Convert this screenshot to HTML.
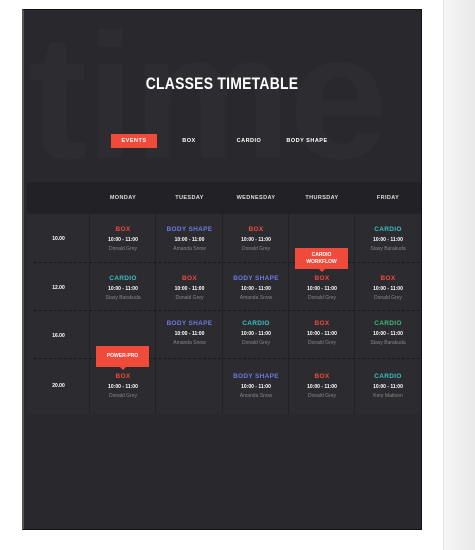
<!DOCTYPE html><html><head><style>
*{margin:0;padding:0;box-sizing:border-box}
body{width:475px;height:550px;background:#fff;position:relative;overflow:hidden;font-family:"Liberation Sans",sans-serif}
.strip{position:absolute;left:443px;top:0;width:32px;height:550px;background:linear-gradient(90deg,#f6f6f6,#e9e9e9);border-left:1px solid #e4e4e4}
.frame{position:absolute;left:22px;top:9px;width:400px;height:521px;background:#29282d;border:1px solid #111;border-left:2px solid #555;overflow:hidden}
.bg{position:absolute;left:4px;top:-2px;font-size:178px;font-weight:bold;color:#2d2c31;letter-spacing:-2px;line-height:1}
h1{position:absolute;left:0;width:396px;top:64px;text-align:center;color:#fff;font-size:17px;font-weight:bold;letter-spacing:0.3px;transform:scaleX(0.82)}
.tab{position:absolute;top:124px;height:14px;font-size:5.5px;font-weight:bold;color:#fff;letter-spacing:.5px;line-height:14px;text-align:center}
.hd{position:absolute;top:172px;height:32px;background:#222126;line-height:32px;font-size:5.5px;font-weight:bold;color:#ddd;text-align:center;letter-spacing:.4px}
.cell{position:absolute;background:#2c2b30;border-right:1px solid #222;text-align:center}
.e{position:absolute;text-align:center;width:66px;height:48px}
.c{position:absolute;text-align:center;font-size:5px;color:#fff;font-weight:bold}
.t{font-size:6.5px;font-weight:bold;letter-spacing:.3px;margin-top:12px;height:10px}
.tm{font-size:5px;color:#fff;font-weight:bold;margin-top:1px}
.n{font-size:5px;color:#888;margin-top:3px}
.r{color:#f04a3a}.b{color:#6b7be0}.cy{color:#3bbfc0}.g{color:#3dbb7a}
.tip{position:absolute;background:#f04a3a;color:#fff;font-size:5px;font-weight:bold;text-align:center;line-height:7px;padding-top:4px}
.tip:after{content:"";position:absolute;left:50%;bottom:-3px;margin-left:-3px;border:3px solid transparent;border-bottom:0;border-top-color:#f04a3a}
.dash{position:absolute;left:10px;width:386px;border-top:1px dashed #1a1a1d}
</style></head><body>
<div class="strip"></div>
<div class="frame">
<div class="bg">time</div>
<h1>CLASSES TIMETABLE</h1>
<div class="tab" style="left:87px;width:46px;background:#f04a3a">EVENTS</div>
<div class="tab" style="left:150px;width:30px">BOX</div>
<div class="tab" style="left:205px;width:40px">CARDIO</div>
<div class="tab" style="left:258px;width:50px">BODY SHAPE</div>
<div class="hd" style="left:3px;width:63px"></div>
<div class="hd" style="left:66px;width:66px">MONDAY</div>
<div class="hd" style="left:132px;width:67px">TUESDAY</div>
<div class="hd" style="left:199px;width:66px">WEDNESDAY</div>
<div class="hd" style="left:265px;width:66px">THURSDAY</div>
<div class="hd" style="left:331px;width:66px">FRIDAY</div>

<div class="cell" style="left:3px;top:204px;width:63px;height:200px"></div>
<div class="c" style="left:3px;width:63px;top:226px">10.00</div>
<div class="c" style="left:3px;width:63px;top:275px">12.00</div>
<div class="c" style="left:3px;width:63px;top:323px">16.00</div>
<div class="c" style="left:3px;width:63px;top:373px">20.00</div>

<div class="cell" style="left:66px;top:204px;width:66px;height:200px"></div>
<div class="cell" style="left:132px;top:204px;width:67px;height:200px"></div>
<div class="cell" style="left:199px;top:204px;width:66px;height:200px"></div>
<div class="cell" style="left:265px;top:204px;width:66px;height:200px"></div>
<div class="cell" style="left:331px;top:204px;width:66px;height:200px;border-right:0"></div>

<div class="dash" style="top:252px"></div>
<div class="dash" style="top:300px"></div>
<div class="dash" style="top:348px"></div>

<div class="e" style="left:66px;top:204px"><div class="t r">BOX</div><div class="tm">10:00 - 11:00</div><div class="n">Donald Grey</div></div>
<div class="e" style="left:132px;top:204px;width:67px"><div class="t b">BODY SHAPE</div><div class="tm">10:00 - 11:00</div><div class="n">Amanda Snow</div></div>
<div class="e" style="left:199px;top:204px"><div class="t r">BOX</div><div class="tm">10:00 - 11:00</div><div class="n">Donald Grey</div></div>
<div class="e" style="left:331px;top:204px"><div class="t cy">CARDIO</div><div class="tm">10:00 - 11:00</div><div class="n">Stasy Barakuda</div></div>

<div class="e" style="left:66px;top:253px"><div class="t cy">CARDIO</div><div class="tm">10:00 - 11:00</div><div class="n">Stasy Barakuda</div></div>
<div class="e" style="left:132px;top:253px;width:67px"><div class="t r">BOX</div><div class="tm">10:00 - 11:00</div><div class="n">Donald Grey</div></div>
<div class="e" style="left:199px;top:253px"><div class="t b">BODY SHAPE</div><div class="tm">10:00 - 11:00</div><div class="n">Amanda Snow</div></div>
<div class="e" style="left:265px;top:253px"><div class="t r">BOX</div><div class="tm">10:00 - 11:00</div><div class="n">Donald Grey</div></div>
<div class="e" style="left:331px;top:253px"><div class="t r">BOX</div><div class="tm">10:00 - 11:00</div><div class="n">Donald Grey</div></div>

<div class="e" style="left:132px;top:298px;width:67px"><div class="t b">BODY SHAPE</div><div class="tm">10:00 - 11:00</div><div class="n">Amanda Snow</div></div>
<div class="e" style="left:199px;top:298px"><div class="t cy">CARDIO</div><div class="tm">10:00 - 11:00</div><div class="n">Donald Grey</div></div>
<div class="e" style="left:265px;top:298px"><div class="t r">BOX</div><div class="tm">10:00 - 11:00</div><div class="n">Donald Grey</div></div>
<div class="e" style="left:331px;top:298px"><div class="t g">CARDIO</div><div class="tm">10:00 - 11:00</div><div class="n">Stasy Barakuda</div></div>

<div class="e" style="left:66px;top:351px"><div class="t r">BOX</div><div class="tm">10:00 - 11:00</div><div class="n">Donald Grey</div></div>
<div class="e" style="left:199px;top:351px"><div class="t b">BODY SHAPE</div><div class="tm">10:00 - 11:00</div><div class="n">Amanda Snow</div></div>
<div class="e" style="left:265px;top:351px"><div class="t r">BOX</div><div class="tm">10:00 - 11:00</div><div class="n">Donald Grey</div></div>
<div class="e" style="left:331px;top:351px"><div class="t cy">CARDIO</div><div class="tm">10:00 - 11:00</div><div class="n">Kery Mattson</div></div>

<div class="tip" style="left:271px;top:238px;width:53px;height:21px">CARDIO<br>WORKFLOW</div>
<div class="tip" style="left:72px;top:336px;width:53px;height:21px;padding-top:7px">POWER-PRO</div>
</div>
</body></html>
